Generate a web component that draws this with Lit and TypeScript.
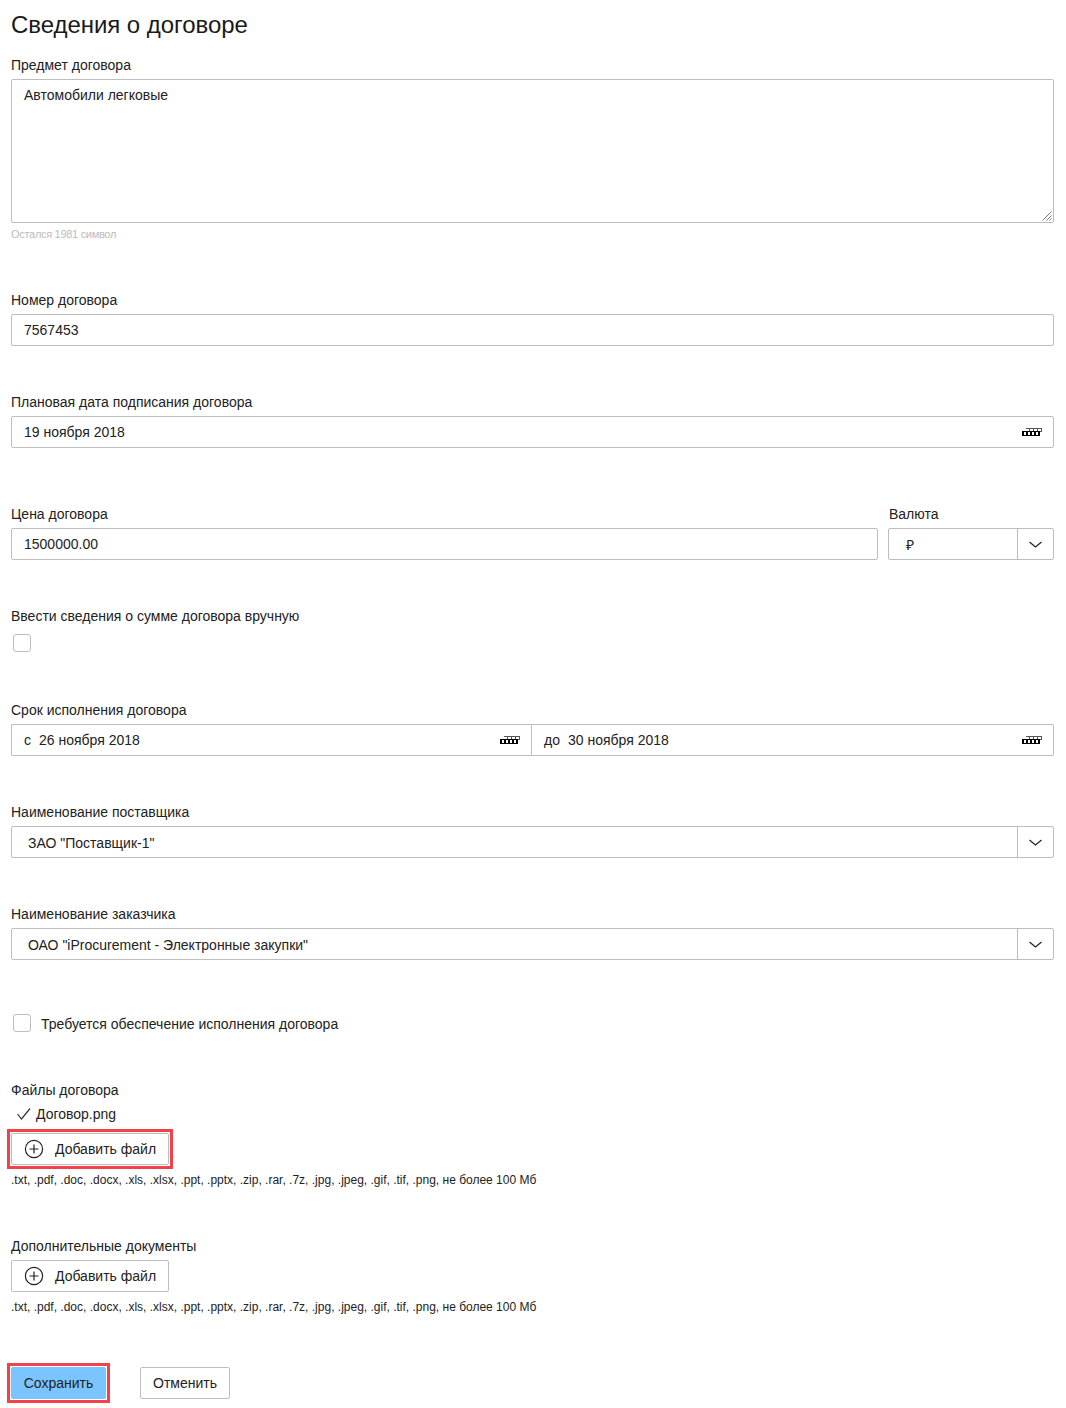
import { LitElement, html, css, svg } from "lit";
import { customElement } from "lit/decorators.js";

const EXTENSIONS = ".txt, .pdf, .doc, .docx, .xls, .xlsx, .ppt, .pptx, .zip, .rar, .7z, .jpg, .jpeg, .gif, .tif, .png, не более 100 Мб";

const calendarIcon = svg`
  <svg width="20" height="8" viewBox="0 0 20 8" fill="none" shape-rendering="crispEdges">
    <path stroke="#555" stroke-width="1" d="M4 0.5H20M7.5 0V3M11.5 0V3M15.5 0V3M19.5 0V3M17 3.5H20"/>
    <path stroke="#000" stroke-width="1" d="M0 3.5H18M0 7.5H18"/>
    <path stroke="#000" stroke-width="2" d="M1 3V8M5 3V8M9 3V8M13 3V8M17 3V8"/>
  </svg>`;

const chevronIcon = svg`
  <svg width="13" height="8" viewBox="0 0 13 8" fill="none" stroke="#222" stroke-width="1.2">
    <path d="M0.5 2L6.5 7L12.5 2"/>
  </svg>`;

const plusIcon = svg`
  <svg width="20" height="20" viewBox="0 0 20 20" fill="none" stroke="#222" stroke-width="1.2">
    <circle cx="10" cy="10" r="8.6"/>
    <path d="M10 5.5V14.5M5.5 10H14.5"/>
  </svg>`;

const checkIcon = svg`
  <svg width="14" height="12" viewBox="0 0 14 12" fill="none" stroke="#333" stroke-width="1.2">
    <path d="M0.5 6L4.5 11L13 0.5"/>
  </svg>`;

const gripIcon = svg`
  <svg class="grip" width="10" height="10" viewBox="0 0 10 10" fill="none" stroke="#777" stroke-width="1">
    <path d="M0.5 9.5L9.5 0.5M4.5 9.5L9.5 4.5M7.5 9.5L9.5 7.5"/>
  </svg>`;

@customElement("app-root")
export class AppRoot extends LitElement {
  static styles = css`
    :host {
      display: block;
      box-sizing: border-box;
      width: 1066px;
      height: 1408px;
      padding: 11px 12px 0 11px;
      background: #fff;
      color: #222;
      font-family: "Liberation Sans", Arial, sans-serif;
      font-size: 14px;
      line-height: 18px;
    }

    h1 {
      margin: 0 0 17px;
      font-size: 24px;
      line-height: 28px;
      font-weight: 400;
      color: #1a1a1a;
      letter-spacing: -0.05px;
    }

    .label {
      display: block;
      height: 18px;
      margin-bottom: 5px;
      white-space: nowrap;
    }

    .label.flush {
      margin-bottom: 0;
    }

    .box {
      box-sizing: border-box;
      display: flex;
      align-items: center;
      height: 32px;
      padding-left: 12px;
      border: 1px solid #bdbdbd;
      border-radius: 2px;
      background: #fff;
    }

    .textarea {
      position: relative;
      align-items: flex-start;
      height: 144px;
      padding-top: 6px;
    }

    .grip {
      position: absolute;
      right: 1px;
      bottom: 1px;
    }

    .hint {
      margin-top: 4px;
      font-size: 11px;
      line-height: 14px;
      color: #bbb;
      letter-spacing: -0.3px;
    }

    .gap-47 { margin-top: 47px; }
    .gap-49 { margin-top: 49px; }
    .gap-50 { margin-top: 50px; }
    .gap-53 { margin-top: 53px; }
    .gap-54 { margin-top: 54px; }
    .gap-57 { margin-top: 57px; }

    .date {
      justify-content: space-between;
      padding-right: 11px;
    }

    .date-text {
      display: flex;
      gap: 8px;
    }

    .price-row {
      display: flex;
      gap: 10px;
    }

    .price {
      flex: 1;
    }

    .currency {
      flex: none;
      width: 166px;
    }

    .currency .label {
      padding-left: 1px;
    }

    .select {
      padding-left: 16px;
      padding-right: 0;
      justify-content: space-between;
    }

    .select-text {
      padding-top: 2px;
    }

    .currency .select {
      padding-left: 17px;
    }

    .select-btn {
      flex: none;
      box-sizing: border-box;
      display: flex;
      align-items: center;
      justify-content: center;
      width: 36px;
      height: 100%;
      border-left: 1px solid #bdbdbd;
    }

    .range {
      display: flex;
    }

    .range .box:first-child {
      width: 520px;
      border-right: 0;
      border-radius: 2px 0 0 2px;
    }

    .range .box:last-child {
      flex: 1;
      border-radius: 0 2px 2px 0;
    }

    .checkbox {
      box-sizing: border-box;
      width: 18px;
      height: 18px;
      margin-left: 2px;
      border: 1px solid #bdbdbd;
      border-radius: 3px;
      background: #fff;
    }

    .checkbox.solo {
      margin-top: 9px;
    }

    .check-row {
      display: flex;
      align-items: center;
      gap: 10px;
      height: 18px;
    }

    .check-text {
      padding-top: 2px;
    }

    .file {
      display: flex;
      align-items: center;
      gap: 5px;
      height: 18px;
      margin: 6px 0 10px 6px;
    }

    .btn {
      box-sizing: border-box;
      display: inline-flex;
      align-items: center;
      justify-content: center;
      height: 32px;
      border: 1px solid #bdbdbd;
      border-radius: 2px;
      background: #fff;
      color: #222;
      font: inherit;
      padding: 0;
    }

    .add {
      display: flex;
      justify-content: flex-start;
      gap: 11px;
      width: 158px;
      padding-left: 12px;
    }

    .ext {
      margin-top: 8px;
      font-size: 12px;
      line-height: 14px;
      white-space: nowrap;
    }

    .actions {
      display: flex;
      gap: 34px;
    }

    .save {
      width: 95px;
      border-color: #7ac5ff;
      background: #7ac5ff;
    }

    .cancel {
      width: 90px;
    }

    .marked {
      position: relative;
    }

    .marked::after {
      content: "";
      position: absolute;
      inset: -5px;
      border: 3px solid #f44048;
      pointer-events: none;
    }
  `;

  render() {
    return html`
      <h1>Сведения о договоре</h1>

      <div class="label">Предмет договора</div>
      <div class="box textarea">Автомобили легковые${gripIcon}</div>
      <div class="hint">Остался 1981 символ</div>

      <div class="gap-50">
        <div class="label">Номер договора</div>
        <div class="box">7567453</div>
      </div>

      <div class="gap-47">
        <div class="label">Плановая дата подписания договора</div>
        <div class="box date">19 ноября 2018 ${calendarIcon}</div>
      </div>

      <div class="gap-57 price-row">
        <div class="price">
          <div class="label">Цена договора</div>
          <div class="box">1500000.00</div>
        </div>
        <div class="currency">
          <div class="label">Валюта</div>
          <div class="box select"><span class="select-text">₽</span><span class="select-btn">${chevronIcon}</span></div>
        </div>
      </div>

      <div class="gap-47">
        <div class="label flush">Ввести сведения о сумме договора вручную</div>
        <div class="checkbox solo"></div>
      </div>

      <div class="gap-49">
        <div class="label">Срок исполнения договора</div>
        <div class="range">
          <div class="box date"><span class="date-text"><span>с</span><span>26 ноября 2018</span></span>${calendarIcon}</div>
          <div class="box date"><span class="date-text"><span>до</span><span>30 ноября 2018</span></span>${calendarIcon}</div>
        </div>
      </div>

      <div class="gap-47">
        <div class="label">Наименование поставщика</div>
        <div class="box select"><span class="select-text">ЗАО "Поставщик-1"</span><span class="select-btn">${chevronIcon}</span></div>
      </div>

      <div class="gap-47">
        <div class="label">Наименование заказчика</div>
        <div class="box select"><span class="select-text">ОАО "iProcurement - Электронные закупки"</span><span class="select-btn">${chevronIcon}</span></div>
      </div>

      <div class="gap-54 check-row">
        <div class="checkbox"></div>
        <span class="check-text">Требуется обеспечение исполнения договора</span>
      </div>

      <div class="gap-49">
        <div class="label flush">Файлы договора</div>
        <div class="file">${checkIcon}<span>Договор.png</span></div>
        <button class="btn add marked">${plusIcon}<span>Добавить файл</span></button>
        <div class="ext">${EXTENSIONS}</div>
      </div>

      <div class="gap-50">
        <div class="label">Дополнительные документы</div>
        <button class="btn add">${plusIcon}<span>Добавить файл</span></button>
        <div class="ext">${EXTENSIONS}</div>
      </div>

      <div class="gap-53 actions">
        <button class="btn save marked">Сохранить</button>
        <button class="btn cancel">Отменить</button>
      </div>
    `;
  }
}
